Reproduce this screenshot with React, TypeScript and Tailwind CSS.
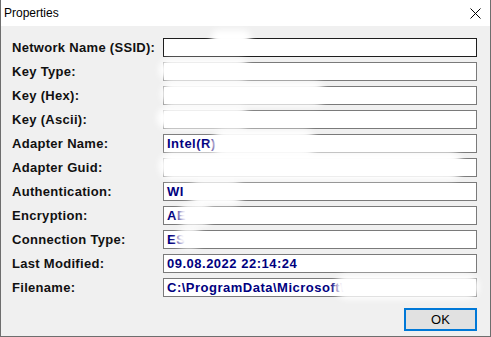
interface Row {
  label: string
  value: string
}

const ROWS: Row[] = [
  { label: 'Network Name (SSID):', value: '' },
  { label: 'Key Type:', value: '' },
  { label: 'Key (Hex):', value: '' },
  { label: 'Key (Ascii):', value: '' },
  { label: 'Adapter Name:', value: 'Intel(R)' },
  { label: 'Adapter Guid:', value: '' },
  { label: 'Authentication:', value: 'WI' },
  { label: 'Encryption:', value: 'AE' },
  { label: 'Connection Type:', value: 'ES' },
  { label: 'Last Modified:', value: '09.08.2022 22:14:24' },
  { label: 'Filename:', value: 'C:\\ProgramData\\Microsoft\\' },
]

// redaction smudges over the original screenshot
const BLOBS = [
  'left-[210px] top-[30px] w-[40px] h-[16px]',
  'left-[158px] top-[59px] w-[90px] h-[22px]',
  'left-[160px] top-[82px] w-[164px] h-[24px]',
  'left-[156px] top-[107px] w-[92px] h-[22px]',
  'left-[211px] top-[130px] w-[104px] h-[26px]',
  'left-[158px] top-[152px] w-[304px] h-[28px]',
  'left-[188px] top-[181px] w-[54px] h-[24px]',
  'left-[177px] top-[204px] w-[34px] h-[22px]',
  'left-[175px] top-[228px] w-[26px] h-[20px]',
  'left-[334px] top-[275px] w-[144px] h-[24px]',
]

export default function App() {
  return (
    <div
      className="relative w-[491px] h-[337px] overflow-hidden bg-[#f0f0f0] border-x border-b border-[#6e6e6e]"
      style={{ fontFamily: '"Liberation Sans", Arial, sans-serif' }}
    >
      {/* Title bar */}
      <div className="h-[26px] bg-white flex items-center justify-between pl-[3px] pr-[9px]">
        <span className="text-[12px] text-black">Properties</span>
        <svg width="11" height="11" viewBox="0 0 11 11" className="text-black">
          <path d="M0.5 0.5 L10.5 10.5 M10.5 0.5 L0.5 10.5" stroke="currentColor" strokeWidth="1" />
        </svg>
      </div>

      {/* Fields */}
      <div className="flex flex-col gap-[5px] pt-[12px] pl-[11px]">
        {ROWS.map((r, i) => (
          <div key={r.label} className="flex items-center h-[19px]">
            <div className="w-[151px] text-[13px] font-bold text-[#111] leading-none tracking-[0.3px]">
              {r.label}
            </div>
            <div
              className={`w-[314px] h-[19px] bg-white border flex items-center pl-[3px] text-[13px] font-bold text-[#000080] leading-none tracking-[0.5px] ${
                i === 0 ? 'border-[#1e1e1e]' : 'border-[#7a7a7a]'
              }`}
            >
              {r.value}
            </div>
          </div>
        ))}
      </div>

      {/* Button */}
      <div className="flex justify-end pr-[13px] pt-[11px]">
        <button className="w-[73px] h-[23px] bg-[#e1e1e1] border-2 border-[#0078d7] text-[13px] text-black">
          OK
        </button>
      </div>

      {BLOBS.map((b) => (
        <div key={b} className={`absolute bg-white rounded-full blur-[3px] ${b}`} />
      ))}
    </div>
  )
}
